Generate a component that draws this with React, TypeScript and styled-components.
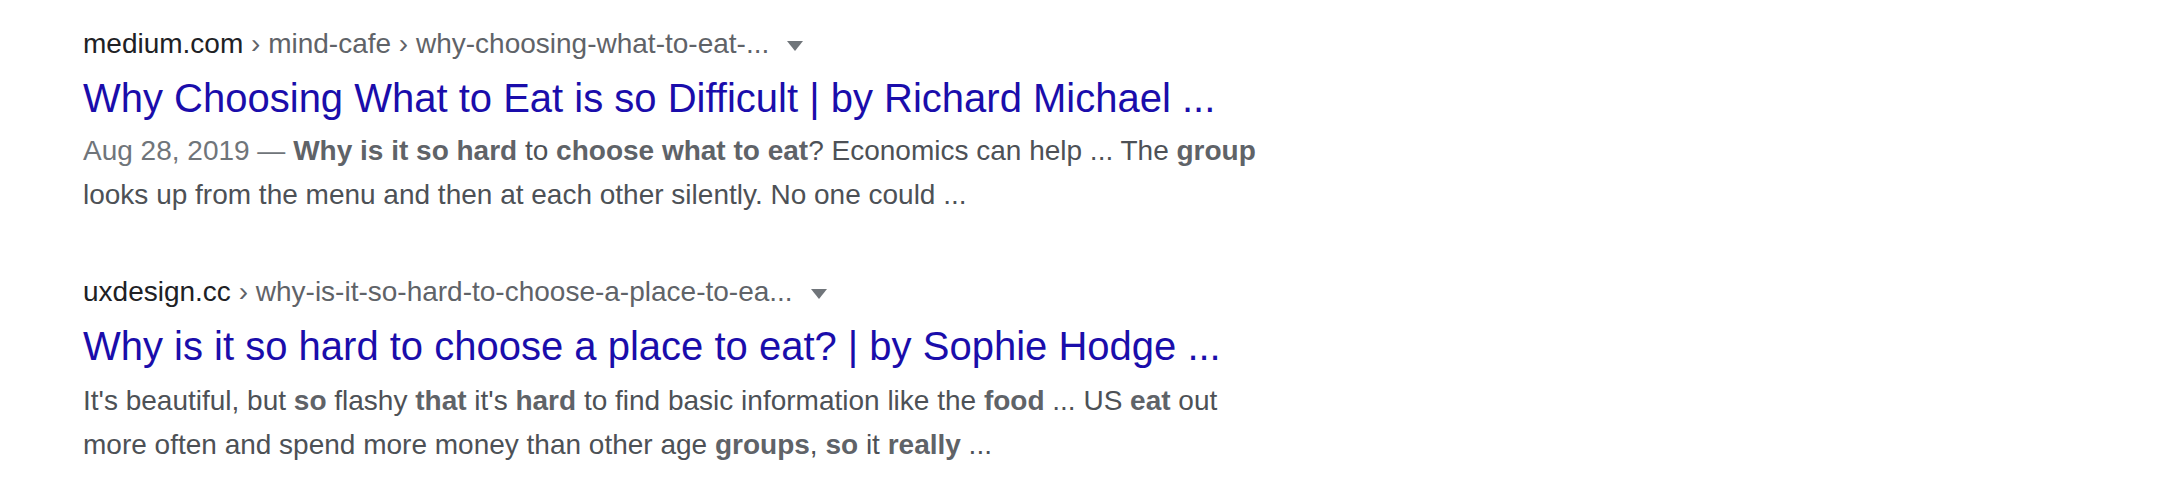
import React from "react";
import styled, { createGlobalStyle } from "styled-components";

const GlobalStyle = createGlobalStyle`
  html, body {
    margin: 0;
    padding: 0;
    background: #ffffff;
  }
  body {
    font-family: Arial, "Liberation Sans", sans-serif;
  }
`;

const Page = styled.main`
  padding: 26px 0 0 83px;
`;

const ResultList = styled.div`
  display: flex;
  flex-direction: column;
  gap: 57px;
`;

const Result = styled.article`
  display: flex;
  flex-direction: column;
`;

const UrlRow = styled.div`
  display: flex;
  align-items: flex-start;
  height: 36px;
  font-size: 28px;
  line-height: 36px;
`;

const Cite = styled.cite`
  font-style: normal;
  color: #202124;
  white-space: nowrap;
`;

const Crumbs = styled.span`
  color: #5f6368;
`;

const Arrow = styled.span`
  display: block;
  width: 0;
  height: 0;
  margin-top: 15px;
  margin-left: 18px;
  border-style: solid;
  border-width: 10px 8px 0 8px;
  border-color: #70757a transparent transparent transparent;
`;

const Title = styled.h3`
  margin: 10px 0 0;
  font-size: 40px;
  line-height: 52px;
  font-weight: 400;
`;

const TitleLink = styled.a`
  color: #1a0dab;
  text-decoration: none;
`;

const Snippet = styled.div<{ $offset?: number }>`
  margin-top: ${(p) => p.$offset ?? 5}px;
  width: 1200px;
  font-size: 28px;
  line-height: 44px;
  color: #4d5156;
`;

const DateStamp = styled.span`
  color: #70757a;
`;

const Em = styled.b`
  color: #5f6368;
  font-weight: 700;
`;

export default function App() {
  return (
    <>
      <GlobalStyle />
      <Page>
        <ResultList>
          <Result>
            <UrlRow>
              <Cite>
                medium.com<Crumbs> › mind-cafe › why-choosing-what-to-eat-...</Crumbs>
              </Cite>
              <Arrow />
            </UrlRow>
            <Title>
              <TitleLink href="#">
                Why Choosing What to Eat is so Difficult | by Richard Michael ...
              </TitleLink>
            </Title>
            <Snippet>
              <DateStamp>Aug 28, 2019 — </DateStamp>
              <Em>Why is it so hard</Em> to <Em>choose what to eat</Em>? Economics can
              help ... The <Em>group</Em> looks up from the menu and then at each other
              silently. No one could ...
            </Snippet>
          </Result>
          <Result>
            <UrlRow>
              <Cite>
                uxdesign.cc<Crumbs> › why-is-it-so-hard-to-choose-a-place-to-ea...</Crumbs>
              </Cite>
              <Arrow />
            </UrlRow>
            <Title>
              <TitleLink href="#">
                Why is it so hard to choose a place to eat? | by Sophie Hodge ...
              </TitleLink>
            </Title>
            <Snippet $offset={7}>
              It's beautiful, but <Em>so</Em> flashy <Em>that</Em> it's <Em>hard</Em> to
              find basic information like the <Em>food</Em> ... US <Em>eat</Em> out more
              often and spend more money than other age <Em>groups</Em>, <Em>so</Em> it{" "}
              <Em>really</Em> ...
            </Snippet>
          </Result>
        </ResultList>
      </Page>
    </>
  );
}
